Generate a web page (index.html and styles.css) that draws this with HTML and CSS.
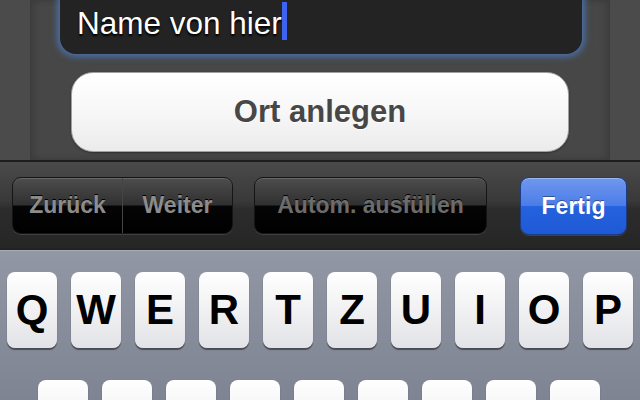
FILE: index.html
```html
<!DOCTYPE html>
<html lang="de">
<head>
<meta charset="utf-8">
<title>Ort anlegen</title>
<link rel="stylesheet" href="styles.css">
</head>
<body>
<div class="screen">
  <div class="content">
    <div class="panel">
      <div class="field"><span class="field-text">Name von hier</span><span class="caret"></span></div>
      <button class="primary">Ort anlegen</button>
    </div>
  </div>
  <div class="toolbar">
    <div class="segmented">
      <span class="seg">Zurück</span>
      <span class="seg seg-right">Weiter</span>
    </div>
    <div class="glass autofill">Autom. ausfüllen</div>
    <div class="done">Fertig</div>
  </div>
  <div class="keyboard">
    <div class="row row1">
      <span class="key">Q</span><span class="key">W</span><span class="key">E</span><span class="key">R</span><span class="key">T</span><span class="key">Z</span><span class="key">U</span><span class="key">I</span><span class="key">O</span><span class="key">P</span>
    </div>
    <div class="row row2">
      <span class="key"></span><span class="key"></span><span class="key"></span><span class="key"></span><span class="key"></span><span class="key"></span><span class="key"></span><span class="key"></span><span class="key"></span>
    </div>
  </div>
</div>
</body>
</html>
```
FILE: styles.css
```css
* { box-sizing: border-box; }
html, body {
  margin: 0;
  padding: 0;
  width: 640px;
  height: 400px;
  overflow: hidden;
  background: #4a4a4a;
  font-family: "Liberation Sans", Arial, Helvetica, sans-serif;
}
.screen {
  display: flex;
  flex-direction: column;
  width: 640px;
  height: 400px;
  overflow: hidden;
}
.content {
  height: 160px;
  flex: none;
  background: #4b4b4b;
  display: flex;
}
.panel {
  flex: 1;
  margin: 0 30px;
  background: #474747;
  border-left: 1px solid #3c3c3c;
  border-right: 1px solid #3c3c3c;
  box-shadow: inset 4px 0 6px rgba(0,0,0,0.12), inset -4px 0 6px rgba(0,0,0,0.12);
  display: flex;
  flex-direction: column;
}
.field {
  height: 70px;
  margin: -16px 27px 0 29px;
  padding: 18px 0 0 17px;
  background: #232323;
  border-radius: 16px;
  box-shadow: 0 0 6px 3px rgba(75, 120, 190, 0.8);
  white-space: nowrap;
}
.field-text {
  font-size: 31.5px;
  line-height: 38px;
  color: #fff;
  text-shadow: 0 2px 2px #000, 0 0 1px #000;
}
.caret {
  display: inline-block;
  width: 5px;
  height: 38px;
  vertical-align: -6px;
  background: #3d63f0;
}
.primary {
  margin: 18px 40px 0 40px;
  height: 80px;
  border: 1px solid #a0a0a0;
  border-radius: 22px;
  background: linear-gradient(#ffffff, #f7f7f7 50%, #ebebeb);
  box-shadow: 0 1px 2px rgba(0,0,0,0.35);
  font-family: "Liberation Sans", Arial, sans-serif;
  font-weight: bold;
  font-size: 31px;
  color: #474747;
  text-shadow: 0 1px 0 #fff;
  padding: 0;
}
.toolbar {
  height: 90px;
  flex: none;
  border-top: 2px solid #1d1d1d;
  border-bottom: 2px solid #222;
  background: linear-gradient(#4a4a4a, #393939 45%, #2c2c2c 55%, #262626);
  display: flex;
  align-items: flex-start;
  padding: 15px 13px 0 12px;
}
.segmented, .glass {
  height: 57px;
  border: 1px solid #151515;
  border-radius: 9px;
  background: linear-gradient(#4d4d4d, #303030 49%, #050505 51%, #000);
  box-shadow: 0 1px 0 rgba(255,255,255,0.12), inset 0 1px 0 rgba(255,255,255,0.15);
  color: #8c8c8c;
  font-weight: bold;
  font-size: 23px;
  text-shadow: 0 -1px 0 #000;
}
.segmented {
  width: 221px;
  display: flex;
}
.seg {
  flex: 1;
  display: flex;
  align-items: center;
  justify-content: center;
}
.seg-right {
  border-left: 1px solid #454545;
}
.glass {
  margin-left: 21px;
  width: 233px;
  display: flex;
  align-items: center;
  justify-content: center;
  color: #6c6c6c;
}
.done {
  margin-left: auto;
  width: 107px;
  height: 58px;
  border: 1px solid #1c3c86;
  border-radius: 9px;
  background: linear-gradient(#6f98ee, #4b7de8 49%, #2562de 51%, #1f59d6);
  box-shadow: 0 1px 0 rgba(255,255,255,0.12), inset 0 1px 0 rgba(255,255,255,0.3);
  color: #fff;
  font-weight: bold;
  font-size: 23px;
  text-shadow: 0 -1px 0 rgba(0,0,0,0.4);
  display: flex;
  align-items: center;
  justify-content: center;
}
.keyboard {
  flex: 1;
  border-top: 1px solid #a7abb5;
  background: linear-gradient(#9297a4, #7c8291 80%, #767c8b);
  padding-top: 21px;
  display: flex;
  flex-direction: column;
  gap: 32px;
}
.row {
  display: flex;
  gap: 14px;
}
.row1 { padding-left: 7px; }
.row2 { padding-left: 38px; }
.key {
  flex: none;
  width: 50px;
  height: 76px;
  border-radius: 8px;
  background: linear-gradient(#ffffff, #f1f1f3 50%, #e2e3e7);
  box-shadow: 0 2px 1px rgba(0,0,0,0.45);
  display: flex;
  align-items: center;
  justify-content: center;
  font-weight: bold;
  font-size: 42px;
  color: #000;
}
```
